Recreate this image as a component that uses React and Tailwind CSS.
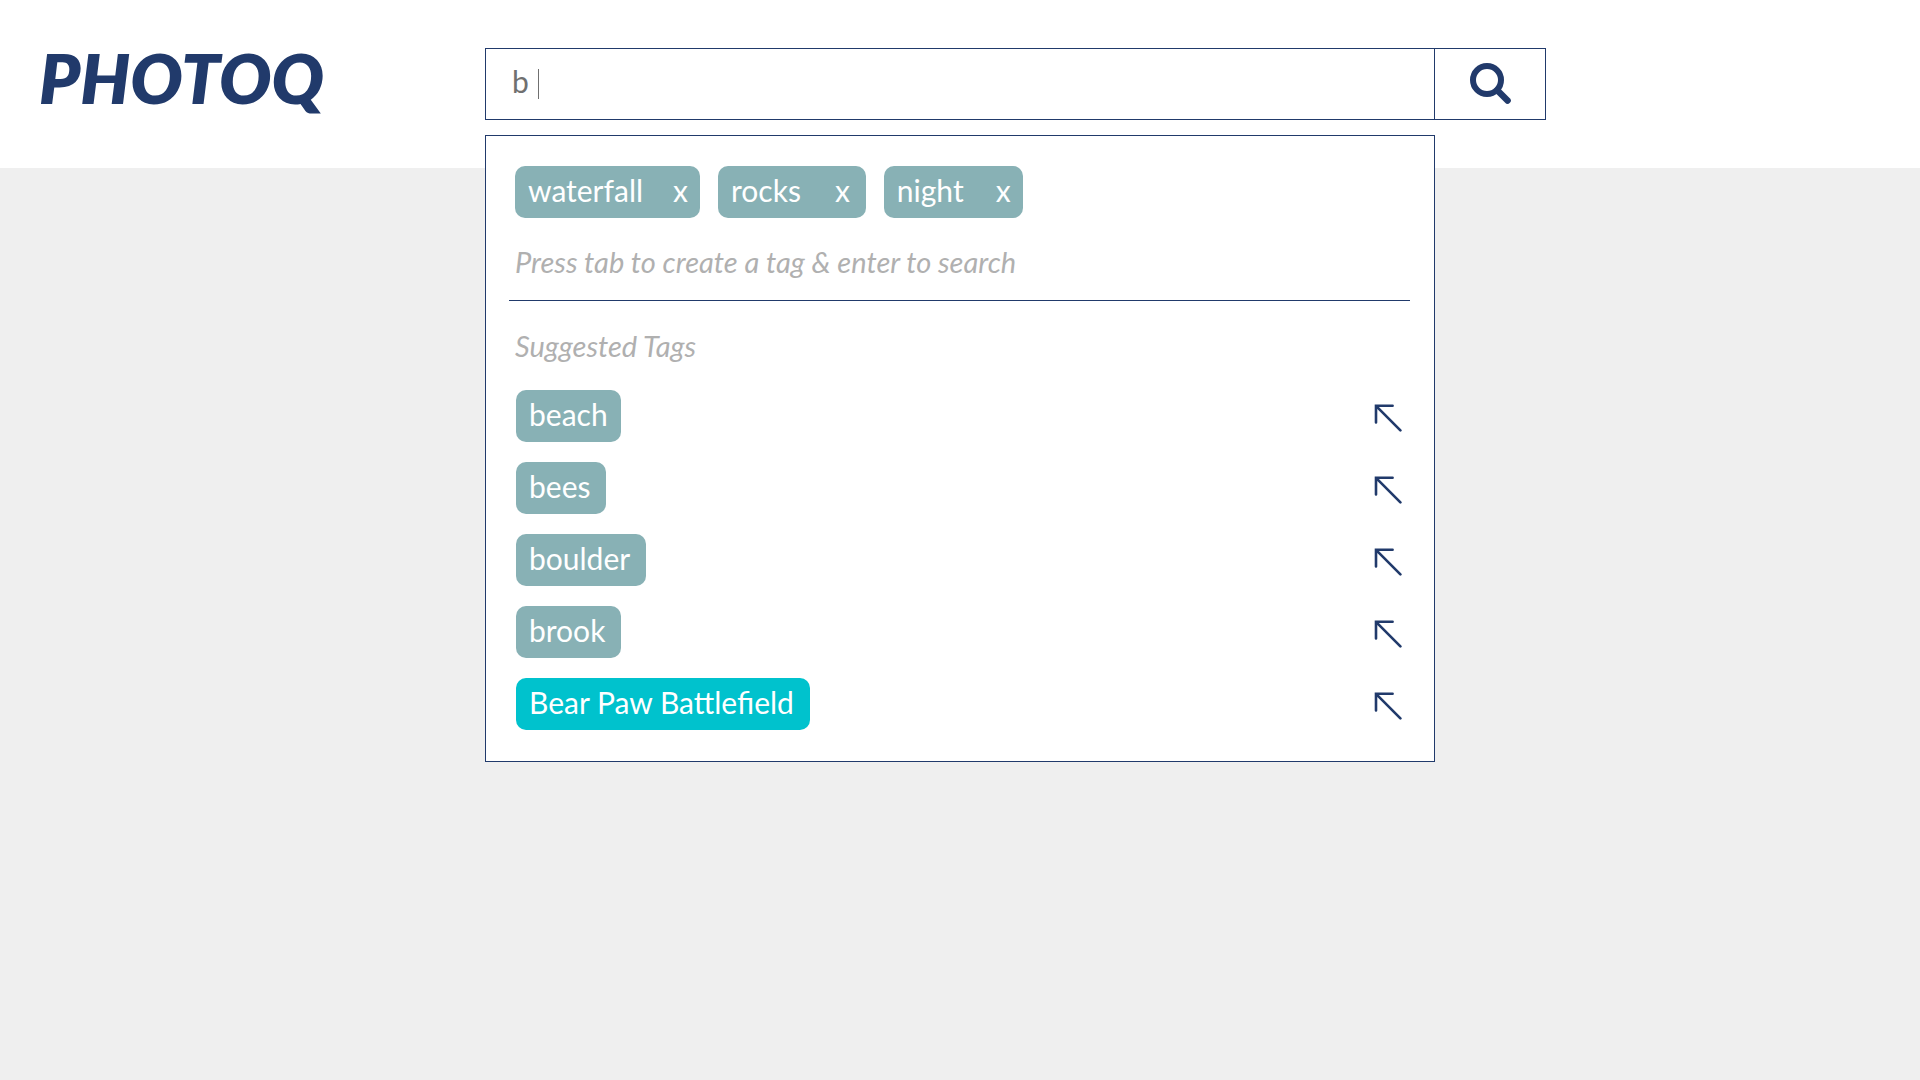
import { useState } from "react";

const activeTags = [
  { name: "waterfall", box: "pl-[13px] pr-3 gap-[30px]" },
  { name: "rocks", box: "pl-[13px] pr-4 gap-[34px]" },
  { name: "night", box: "pl-[13px] pr-3 gap-8" },
];

const suggestions = [
  { name: "beach", box: "pr-[13px] bg-[#88b1b5]" },
  { name: "bees", box: "pr-4 bg-[#88b1b5]" },
  { name: "boulder", box: "pr-4 bg-[#88b1b5]" },
  { name: "brook", box: "pr-4 bg-[#88b1b5]" },
  { name: "Bear Paw Battlefield", box: "pr-4 bg-[#00c2cd]" },
];

function SearchIcon() {
  return (
    <svg className="h-[42px] w-[42px]" viewBox="0 0 42 42" fill="none" stroke="currentColor" aria-hidden="true">
      <circle cx="18" cy="17" r="14" strokeWidth="6" />
      <path d="M28.5 27.5 L38.5 37.5" strokeWidth="6.6" strokeLinecap="round" />
    </svg>
  );
}

function InsertArrow() {
  return (
    <svg
      className="h-7 w-7"
      viewBox="0 0 28 28"
      fill="none"
      stroke="currentColor"
      strokeWidth="2.6"
      strokeLinecap="round"
      strokeLinejoin="miter"
      aria-hidden="true"
    >
      <path d="M2 18.4 V1.8 H18.6 M2 1.8 L26.4 26.4" />
    </svg>
  );
}

function ActiveTag({ name, box }) {
  return (
    <li className={`flex h-[52px] items-center rounded-[10px] bg-[#88b1b5] pb-[5px] text-white ${box}`}>
      <span>{name}</span>
      <button type="button" aria-label={`Remove ${name}`}>
        x
      </button>
    </li>
  );
}

function Suggestion({ name, box }) {
  return (
    <li className="flex items-center justify-between">
      <button type="button" className={`h-[52px] rounded-[10px] pb-[5px] pl-[13px] text-white ${box}`}>
        {name}
      </button>
      <button type="button" aria-label={`Use ${name}`} className="pt-1 text-[#213a6b]">
        <InsertArrow />
      </button>
    </li>
  );
}

export default function App() {
  const [query, setQuery] = useState("b");

  return (
    <div className="min-h-screen bg-[#efefef] font-['Lato',sans-serif] text-[30px] leading-9">
      <header className="grid h-[168px] grid-cols-[446px_minmax(0,1061px)] items-start bg-white pl-[39px]">
        <a href="#" className="pt-9 text-[69px] font-extrabold italic leading-[84px] text-[#213a6b]">
          PHOTOQ
        </a>
        <form className="flex h-[120px] pt-12" role="search" onSubmit={(e) => e.preventDefault()}>
          <div className="relative min-w-0 flex-1">
            <label className="flex h-full cursor-text items-center border border-[#213a6b] pl-[26px] text-[#707070]">
              <input
                type="text"
                aria-label="Search tags"
                value={query}
                onChange={(e) => setQuery(e.target.value)}
                className="field-sizing-content max-w-full bg-transparent pb-1.5 outline-none"
              />
              <span className="ml-[9px] h-[30px] w-px bg-[#707070]" />
            </label>

            <div className="absolute inset-x-0 top-full mt-[15px] border border-[#213a6b] bg-white pt-[30px] pb-[31px]">
              <ul className="flex gap-[18px] pl-[29px]">
                {activeTags.map((t) => (
                  <ActiveTag key={t.name} {...t} />
                ))}
              </ul>
              <p className="mt-[26px] pl-[29px] text-[29px] italic text-[#b0b0b0]">
                Press tab to create a tag &amp; enter to search
              </p>
              <hr className="mt-5 mr-6 ml-[23px] border-[#213a6b]" />
              <h2 className="mt-[27px] pl-[29px] text-[29px] italic text-[#b0b0b0]">Suggested Tags</h2>
              <ul className="mt-[26px] flex flex-col gap-5 pr-8 pl-[30px]">
                {suggestions.map((s) => (
                  <Suggestion key={s.name} {...s} />
                ))}
              </ul>
            </div>
          </div>
          <button
            type="submit"
            aria-label="Search"
            className="flex w-[111px] items-center justify-center border border-l-0 border-[#213a6b] text-[#213a6b]"
          >
            <SearchIcon />
          </button>
        </form>
      </header>
    </div>
  );
}
